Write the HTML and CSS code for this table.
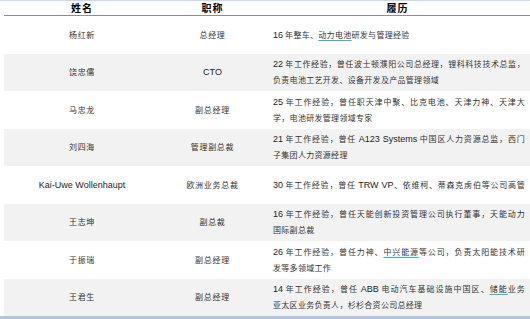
FILE: index.html
```html
<!DOCTYPE html>
<html lang="zh">
<head>
  <meta charset="UTF-8" />
  <title>管理团队</title>
  <link rel="stylesheet" href="styles.css">
</head>
<body>
  <div class="rule-top"></div>

  <div class="sheet">
    <div class="row head">
      <div class="cell">姓名</div>
      <div class="cell">职称</div>
      <div class="cell">履历</div>
    </div>

    <div class="row">
      <div class="cell">杨红新</div>
      <div class="cell">总经理</div>
      <div class="cell bio">
        <span class="line"><span class="en">16</span> 年整车、<span class="mark">动力电池</span>研发与管理经验</span>
      </div>
    </div>

    <div class="row alt">
      <div class="cell">饶忠儒</div>
      <div class="cell"><span class="en">CTO</span></div>
      <div class="cell bio">
        <span class="line full"><span class="en">22</span> 年工作经验，曾任波士顿濮阳公司总经理，锂科科技技术总监，</span>
        <span class="line">负责电池工艺开发、设备开发及产品管理领域</span>
      </div>
    </div>

    <div class="row">
      <div class="cell">马忠龙</div>
      <div class="cell">副总经理</div>
      <div class="cell bio">
        <span class="line full"><span class="en">25</span> 年工作经验，曾任职天津中聚、比克电池、天津力神、天津大</span>
        <span class="line">学，电池研发管理领域专家</span>
      </div>
    </div>

    <div class="row alt">
      <div class="cell">刘四海</div>
      <div class="cell">管理副总裁</div>
      <div class="cell bio">
        <span class="line full"><span class="en">21</span> 年工作经验，曾任 <span class="en">A123 Systems</span> 中国区人力资源总监，西门</span>
        <span class="line">子集团人力资源经理</span>
      </div>
    </div>

    <div class="row">
      <div class="cell"><span class="en">Kai-Uwe Wollenhaupt</span></div>
      <div class="cell">欧洲业务总裁</div>
      <div class="cell bio">
        <span class="line full"><span class="en">30</span> 年工作经验，曾任 <span class="en">TRW VP</span>、依维柯、蒂森克虏伯等公司高管</span>
      </div>
    </div>

    <div class="row alt">
      <div class="cell">王志坤</div>
      <div class="cell">副总裁</div>
      <div class="cell bio">
        <span class="line full"><span class="en">16</span> 年工作经验，曾任天能创新投资管理公司执行董事，天能动力</span>
        <span class="line">国际副总裁</span>
      </div>
    </div>

    <div class="row">
      <div class="cell">于振瑞</div>
      <div class="cell">副总经理</div>
      <div class="cell bio">
        <span class="line full"><span class="en">26</span> 年工作经验，曾任力神、<span class="mark">中兴能源</span>等公司，负责太阳能技术研</span>
        <span class="line">发等多领域工作</span>
      </div>
    </div>

    <div class="row alt">
      <div class="cell">王君生</div>
      <div class="cell">副总经理</div>
      <div class="cell bio">
        <span class="line full"><span class="en">14</span> 年工作经验，曾任 <span class="en">ABB</span> 电动汽车基础设施中国区、<span class="mark">储能</span>业务</span>
        <span class="line">亚太区业务负责人，杉杉合资公司总经理</span>
      </div>
    </div>
  </div>

  <div class="rule-bottom"></div>
</body>
</html>
```

FILE: styles.css
```css
* { margin: 0; padding: 0; box-sizing: border-box; }
html, body {
  width: 100%;
  height: 100%;
  overflow: hidden;
  background: white;
}

body {
  font-family: "Noto Sans CJK SC", sans-serif;
  color: #333;
}

.rule-top { height: 1px; background: #c9d8ec; }
.rule-bottom { height: 3px; background: #b5c4dc; }

.sheet { margin-left: 4px; }

.row {
  display: grid;
  grid-template-columns: 156px 105px 1fr;
  align-items: center;
  height: 37.5px;
}
.row.alt { background: #f2f2f2; }

.head {
  height: 15px;
  border-bottom: 1px solid #8f8f8f;
  color: #000;
}
.head .cell {
  font-size: 10px;
  font-weight: bold;
  letter-spacing: 1px;
  line-height: 14px;
}

.cell {
  text-align: center;
  font-size: 8px;
  letter-spacing: 0.7px;
  line-height: 16px;
}

.bio {
  text-align: left;
  padding: 0 5px 0 8px;
  letter-spacing: 0.3px;
}

.line { display: block; }
.line.full { text-align: justify; text-align-last: justify; }

.en {
  font-family: "Liberation Sans", sans-serif;
  font-size: 9px;
  letter-spacing: 0;
  color: #1e1e1e;
}

.mark {
  text-decoration: underline;
  text-decoration-color: #35b6c9;
  text-decoration-thickness: 1px;
  text-underline-offset: 2px;
}
```
